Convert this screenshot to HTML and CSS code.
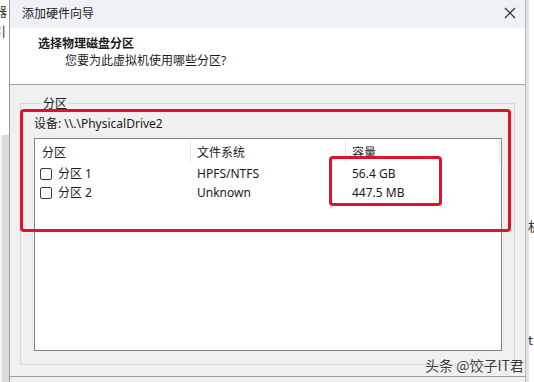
FILE: index.html
```html
<!DOCTYPE html>
<html lang="zh-CN">

<head>
    <meta charset="UTF-8">
    <title>添加硬件向导</title>
    <link rel="stylesheet" href="styles.css">
</head>

<body>
    <div class="screen">
        <div class="edge edge-left">
            <span class="frag f1">器</span>
            <span class="frag f2">引</span>
        </div>

        <section class="dialog">
            <header class="titlebar">
                <span class="title">添加硬件向导</span>
                <svg class="close" width="12" height="12" viewBox="0 0 12 12">
                    <path d="M1 1 L11 11 M11 1 L1 11" stroke="#222" stroke-width="1.1" fill="none"/>
                </svg>
            </header>

            <div class="head">
                <h1>选择物理磁盘分区</h1>
                <p>您要为此虚拟机使用哪些分区?</p>
            </div>

            <div class="body">
                <fieldset class="group">
                    <legend>分区</legend>
                    <div class="device">设备: \\.\PhysicalDrive2</div>
                    <div class="list">
                        <div class="row list-head">
                            <span class="col c1">分区</span>
                            <span class="col c2">文件系统</span>
                            <span class="col c3">容量</span>
                        </div>
                        <div class="row">
                            <span class="col c1"><i class="check"></i>分区 1</span>
                            <span class="col c2">HPFS/NTFS</span>
                            <span class="col c3">56.4 GB</span>
                        </div>
                        <div class="row">
                            <span class="col c1"><i class="check"></i>分区 2</span>
                            <span class="col c2">Unknown</span>
                            <span class="col c3">447.5 MB</span>
                        </div>
                    </div>
                </fieldset>
                <!-- 标注框 -->
                <div class="mark mark-outer"></div>
                <div class="mark mark-inner"></div>
            </div>

            <footer class="foot"></footer>
        </section>

        <div class="edge edge-right">
            <span class="frag f3">机</span>
            <span class="frag f4">t</span>
        </div>

        <div class="watermark">头条 @饺子IT君</div>
    </div>
</body>

</html>
```

FILE: styles.css
```css
* {
    box-sizing: border-box;
}

body {
    margin: 0;
    background-color: white;
    font-family: "Noto Sans", "Noto Sans CJK SC", sans-serif;
    font-size: 12px;
    color: #1b1b1b;
}

.screen {
    position: relative;
    display: flex;
    width: 534px;
    height: 382px;
    overflow: hidden;
}

/* 背景窗口的边 */
.edge {
    position: relative;
    overflow: hidden;
    background-color: white;
}

.edge-left {
    width: 9px;
    background: white linear-gradient(to right, #f4f4f4 0, #f4f4f4 2px, #d9d9d9 2px, #d9d9d9 9px) no-repeat 0 135px;
}

.edge-right {
    width: 8px;
    background: linear-gradient(to right, #e2e2e2 0, #e2e2e2 3px, white 3px);
}

.frag {
    position: absolute;
    font-family: "Noto Sans CJK SC", sans-serif;
    font-size: 13px;
    line-height: 14px;
    color: #333;
}

.f1 {
    top: 4px;
    left: -6px;
}

.f2 {
    top: 24px;
    left: -7px;
}

.f3 {
    top: 219px;
    left: 2px;
}

.f4 {
    top: 333px;
    left: 2px;
}

.dialog {
    width: 517px;
    display: flex;
    flex-direction: column;
    border-left: 1px solid #9a9a9a;
    border-right: 1px solid #b9b9b9;
    background-color: #f0f0f0;
}

.titlebar {
    height: 28px;
    display: flex;
    align-items: center;
    justify-content: space-between;
    padding: 0 9px 2px 12px;
    background-color: #eef1f6;
}

.close {
    display: block;
}

.head {
    height: 57px;
    padding: 8px 0 0 28px;
    background-color: white;
    border-bottom: 1px solid #a0a0a0;
}

.head h1 {
    margin: 0;
    font-size: 12px;
    line-height: 16px;
    font-weight: 700;
}

.head p {
    margin: 1px 0 0 27px;
    line-height: 16px;
}

.body {
    position: relative;
    height: 291px;
    padding: 11px 10px 0 10px;
}

.group {
    margin: 0;
    height: 269px;
    padding: 0 12px 12px 13px;
    border: 1px solid #d6d6d6;
}

.group legend {
    margin-left: 7px;
    padding: 0 2px;
    line-height: 15px;
}

.device {
    margin-top: 5px;
    line-height: 16px;
}

.list {
    margin-top: 6px;
    height: 213px;
    background-color: white;
    border: 1px solid #828282;
}

.row {
    display: flex;
    height: 19px;
    align-items: center;
}

.list-head {
    height: 25px;
}

.col {
    display: flex;
    align-items: center;
    padding-left: 6px;
    line-height: 16px;
}

.c1 {
    width: 156px;
    padding-left: 5px;
}

.c2 {
    width: 155px;
}

.c3 {
    width: 154px;
}

.list-head .col {
    height: 22px;
    padding-top: 2px;
    border-right: 1px solid #e5e5e5;
}

.list-head .c1 {
    padding-left: 7px;
}

.check {
    width: 12px;
    height: 12px;
    margin-right: 6px;
    border: 1px solid #3a3a3a;
    border-radius: 2px;
    background-color: white;
}

.foot {
    flex: 1;
    border-top: 1px solid #a0a0a0;
}

/* 红色标注 */
.mark {
    position: absolute;
    border: 3px solid #e1102c;
    border-radius: 4px;
}

.mark-outer {
    left: 10px;
    top: 24px;
    width: 491px;
    height: 123px;
}

.mark-inner {
    left: 319px;
    top: 71px;
    width: 113px;
    height: 50px;
}

.watermark {
    position: absolute;
    left: 425px;
    top: 356px;
    font-family: "Noto Sans CJK SC", sans-serif;
    font-size: 14px;
    line-height: 18px;
    color: #3c3c3c;
    text-shadow: 0 0 2px white;
}
```
